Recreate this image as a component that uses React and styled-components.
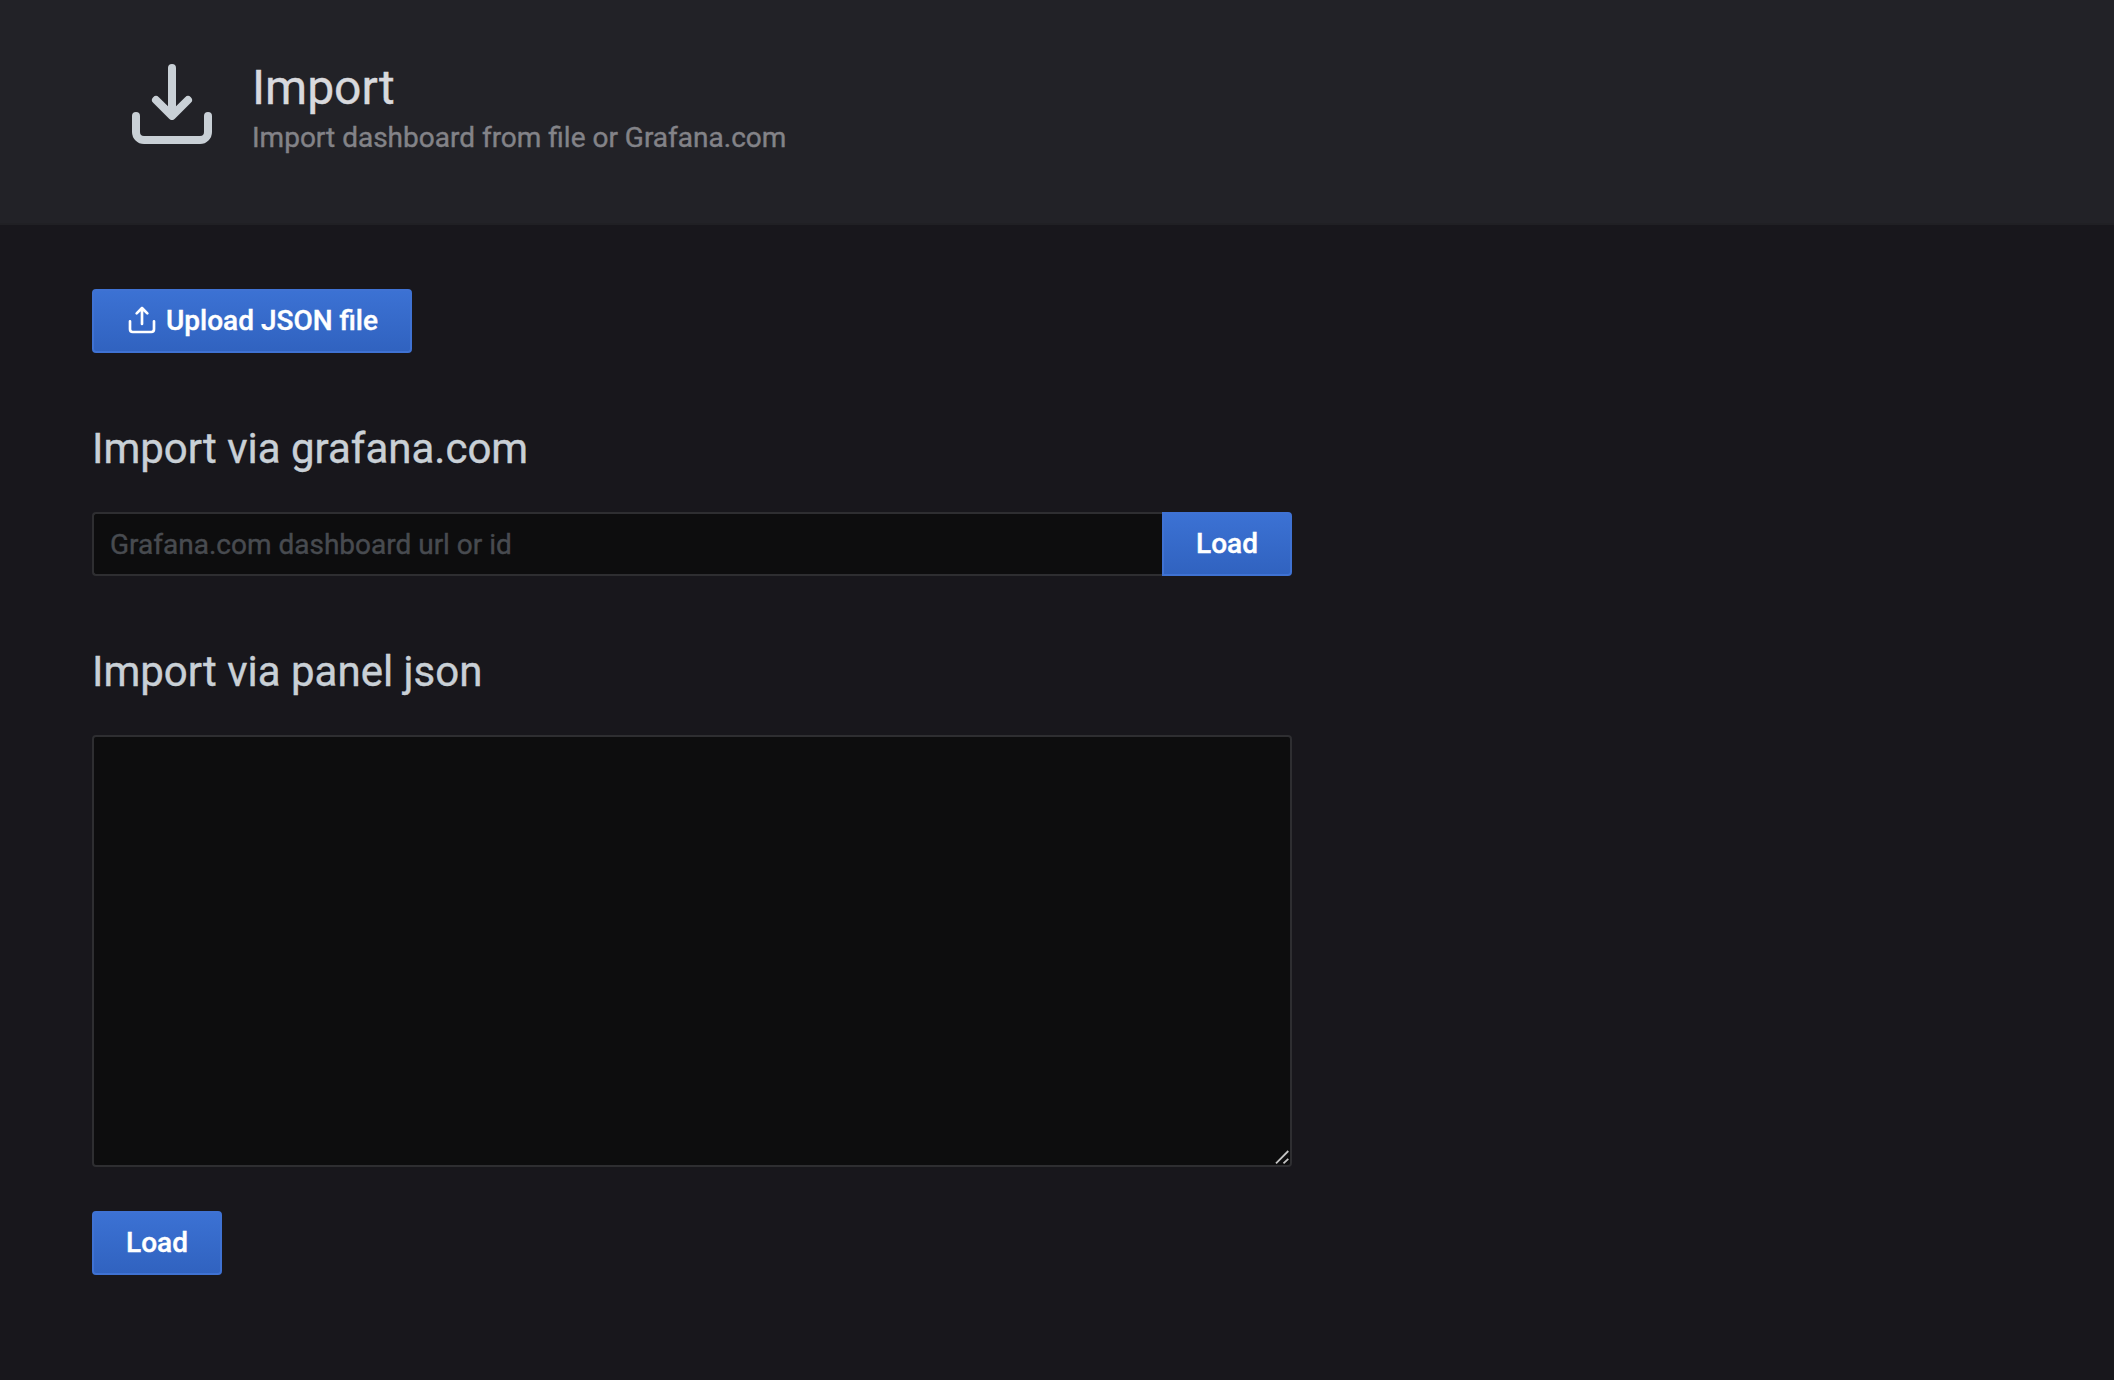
import React from "react";
import styled, { createGlobalStyle } from "styled-components";

const GlobalStyle = createGlobalStyle`
  * { box-sizing: border-box; }
  body { margin: 0; background: #18171c; font-family: Roboto, "Liberation Sans", sans-serif; font-size: 28px; color: #c7d0d9; -webkit-text-stroke: 0.4px currentColor; }
`;
const Page = styled.div`
  min-height: 1380px;
  display: flex;
  flex-direction: column;
`;
const Header = styled.header`
  height: 225px;
  flex: none;
  display: flex;
  align-items: flex-start;
  gap: 32px;
  padding: 56px 124px 0;
  background: #222227;
  border-bottom: 2px solid #202024;
`;
const HeaderIcon = styled.svg`
  width: 96px;
  height: 96px;
  flex: none;
  fill: #c9d0d6;
`;
const HeaderText = styled.div`
  display: flex;
  flex-direction: column;
`;
const Title = styled.h1`
  margin: 2px 0 0;
  font-size: 48px;
  line-height: 60px;
  font-weight: 400;
  color: #d8d9dd;
`;
const Subtitle = styled.div`
  font-size: 28px;
  line-height: 40px;
  color: #838388;
`;
const Content = styled.main`
  width: 1292px;
  padding: 64px 0 0 92px;
  display: flex;
  flex-direction: column;
  align-items: flex-start;
`;
const Button = styled.button`
  height: 64px;
  width: ${(p) => p.$width}px;
  flex: none;
  display: flex;
  align-items: center;
  justify-content: center;
  gap: 8px;
  padding: 0;
  border: 2px solid #3f72d3;
  border-radius: ${(p) => (p.$attached ? "0 4px 4px 0" : "4px")};
  background: linear-gradient(180deg, #3c72d4 0%, #3062bf 100%) border-box;
  color: #fff;
  font: 500 28px/40px Roboto, "Liberation Sans", sans-serif;
  -webkit-text-stroke: 0.4px currentColor;
`;
const ButtonIcon = styled.svg`
  width: 32px;
  height: 32px;
  margin-bottom: 3px;
  fill: #fff;
`;
const SectionTitle = styled.h3`
  margin: 68px 0 35px;
  font-size: 42px;
  line-height: 56px;
  font-weight: 400;
  color: #c9d0d6;
`;
const InputRow = styled.div`
  display: flex;
  width: 1200px;
`;
const Input = styled.input`
  flex: 1;
  min-width: 0;
  height: 64px;
  padding: 0 16px;
  border: 2px solid #2e2e31;
  border-right: 0;
  border-radius: 4px 0 0 4px;
  background: #0d0d0e;
  color: #c7d0d9;
  font: 400 28px/40px Roboto, "Liberation Sans", sans-serif;
  &::placeholder { color: #484b50; opacity: 1; }
`;
const JsonBox = styled.div`
  width: 1200px;
  height: 432px;
  margin-bottom: 44px;
  display: flex;
  align-items: flex-end;
  justify-content: flex-end;
  border: 2px solid #2e2e31;
  border-radius: 4px;
  background: #0d0d0e;
`;
const Textarea = styled.textarea`
  flex: 1;
  align-self: stretch;
  padding: 8px 16px;
  border: 0;
  outline: 0;
  resize: none;
  background: transparent;
  color: #c7d0d9;
  font: 400 28px/40px Roboto, "Liberation Sans", sans-serif;
`;
const Grip = styled.svg`
  width: 18px;
  height: 18px;
  flex: none;
  fill: none;
  stroke: #c4c4c4;
  stroke-width: 1.8;
`;

export default function App() {
  return (
    <Page>
      <GlobalStyle />
      <Header>
        <HeaderIcon viewBox="0 0 24 24">
          <path d="M21,14a1,1,0,0,0-1,1v4a1,1,0,0,1-1,1H5a1,1,0,0,1-1-1V15a1,1,0,0,0-2,0v4a3,3,0,0,0,3,3H19a3,3,0,0,0,3-3V15A1,1,0,0,0,21,14Zm-9.71,1.71a1,1,0,0,0,.33.21.94.94,0,0,0,.76,0,1,1,0,0,0,.33-.21l4-4a1,1,0,0,0-1.42-1.42L13,12.59V3a1,1,0,0,0-2,0v9.59l-2.29-2.3a1,1,0,1,0-1.42,1.42Z" />
        </HeaderIcon>
        <HeaderText>
          <Title>Import</Title>
          <Subtitle>Import dashboard from file or Grafana.com</Subtitle>
        </HeaderText>
      </Header>
      <Content>
        <Button $width={320}>
          <ButtonIcon viewBox="0 0 24 24">
            <path d="M8.71,7.71,11,5.41V15a1,1,0,0,0,2,0V5.41l2.29,2.3a1,1,0,0,0,1.42,0,1,1,0,0,0,0-1.42l-4-4a1,1,0,0,0-.33-.21,1,1,0,0,0-.76,0,1,1,0,0,0-.33.21l-4,4A1,1,0,1,0,8.71,7.71ZM21,12a1,1,0,0,0-1,1v6a1,1,0,0,1-1,1H5a1,1,0,0,1-1-1V13a1,1,0,0,0-2,0v6a3,3,0,0,0,3,3H19a3,3,0,0,0,3-3V13A1,1,0,0,0,21,12Z" />
          </ButtonIcon>
          Upload JSON file
        </Button>
        <SectionTitle>Import via grafana.com</SectionTitle>
        <InputRow>
          <Input placeholder="Grafana.com dashboard url or id" />
          <Button $width={130} $attached>Load</Button>
        </InputRow>
        <SectionTitle>Import via panel json</SectionTitle>
        <JsonBox>
          <Textarea />
          <Grip viewBox="0 0 18 18">
            <path d="M4 16.3 16.3 4M11.5 16.3 16.3 11.8" />
          </Grip>
        </JsonBox>
        <Button $width={130}>Load</Button>
      </Content>
    </Page>
  );
}
